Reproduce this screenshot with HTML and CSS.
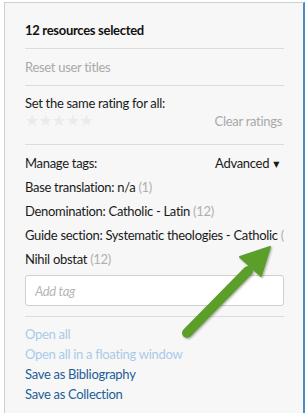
FILE: index.html
```html
<!DOCTYPE html>
<html lang="en">
<head>
  <meta charset="UTF-8" />
  <title>Selection panel</title>
  <link rel="stylesheet" href="styles.css">
</head>
<body>
  <div class="panel">
    <div class="section title-row">
      <strong>12 resources selected</strong>
    </div>

    <div class="section reset">
      <span class="muted">Reset user titles</span>
    </div>

    <div class="section rating">
      <div>Set the same rating for all:</div>
      <div class="rating-row">
        <span class="stars">★★★★★</span>
        <span class="muted">Clear ratings</span>
      </div>
    </div>

    <div class="section tags">
      <div class="tags-head">
        <span>Manage tags:</span>
        <span>Advanced<span class="caret">▼</span></span>
      </div>
      <div class="tag">Base translation: n/a <span class="count">(1)</span></div>
      <div class="tag">Denomination: Catholic - Latin <span class="count">(12)</span></div>
      <div class="tag">Guide section: Systematic theologies - Catholic <span class="count">(12)</span></div>
      <div class="tag">Nihil obstat <span class="count">(12)</span></div>
      <input class="add-tag" type="text" placeholder="Add tag" />
    </div>

    <div class="links">
      <a href="#" class="disabled">Open all</a>
      <a href="#" class="disabled">Open all in a floating window</a>
      <a href="#">Save as Bibliography</a>
      <a href="#">Save as Collection</a>
    </div>
  </div>

  <!-- callout arrow -->
  <svg class="arrow" width="110" height="110" viewBox="0 0 110 110">
    <defs>
      <filter id="shadow" x="-20%" y="-20%" width="140%" height="140%">
        <feDropShadow dx="1" dy="1" stdDeviation="1.2" flood-color="#000" flood-opacity="0.35"/>
      </filter>
    </defs>
    <g filter="url(#shadow)" fill="#5c9e2b" stroke="#5c9e2b">
      <line x1="15" y1="91" x2="76" y2="29" stroke-width="10" stroke-linecap="round"/>
      <polygon points="98,5 68,15 89,34" stroke-width="2" stroke-linejoin="round"/>
    </g>
  </svg>
</body>
</html>
```

FILE: styles.css
```css
body {
  margin: 0;
  background: white;
  font-family: Lato, "Open Sans", sans-serif;
  font-size: 13px;
  letter-spacing: -0.3px;
  line-height: 20px;
  color: #1a1a1a;
}

.panel {
  margin: 2px 0 0 4px;
  height: 411px;
  box-sizing: border-box;
  background: #f7f7f7;
  border-top: 1px solid #cfcfcf;
  border-left: 1px solid #cfcfcf;
  border-right: 2px solid #4f8ac4;
  padding: 0 19px 0 20px;
  overflow: hidden;
}

.section {
  border-bottom: 1px solid #dcdcdc;
}

.title-row {
  padding: 17px 0 8px;
}

.title-row strong {
  font-weight: 700;
  color: #111;
}

.reset {
  padding: 8px 0 8px;
}

.muted {
  color: #a9a9a9;
}

.rating {
  padding: 7px 0 11px;
}

.rating-row {
  display: flex;
  justify-content: space-between;
  align-items: center;
  margin-top: -2px;
  margin-bottom: 2px;
  padding-right: 2px;
}

.stars {
  color: #ebebeb;
  font-size: 16px;
  letter-spacing: -0.8px;
  font-family: "DejaVu Sans", sans-serif;
}

.tags {
  padding: 8px 0 10px;
}

.tags-head {
  display: flex;
  justify-content: space-between;
  padding-right: 5px;
}

.caret {
  font-size: 8px;
  font-family: "DejaVu Sans", sans-serif;
  margin-left: 4px;
  vertical-align: 1px;
}

.tag {
  line-height: 24px;
  white-space: nowrap;
  overflow: hidden;
}

.count {
  color: #b0b0b0;
}

.add-tag {
  display: block;
  width: 100%;
  box-sizing: border-box;
  height: 31px;
  margin-top: 4px;
  padding: 0 9px;
  border: 1px solid #cfcfcf;
  border-radius: 3px;
  background: white;
  font-family: inherit;
  font-size: 13px;
  letter-spacing: -0.3px;
}

.add-tag::placeholder {
  color: #b5b5b5;
  font-style: italic;
}

.links {
  display: flex;
  flex-direction: column;
  padding-top: 7px;
}

.links a {
  line-height: 20px;
  text-decoration: none;
  color: #1c5d99;
}

.links a.disabled {
  color: #a9cbe9;
}

.arrow {
  position: absolute;
  left: 172px;
  top: 242px;
}
```
